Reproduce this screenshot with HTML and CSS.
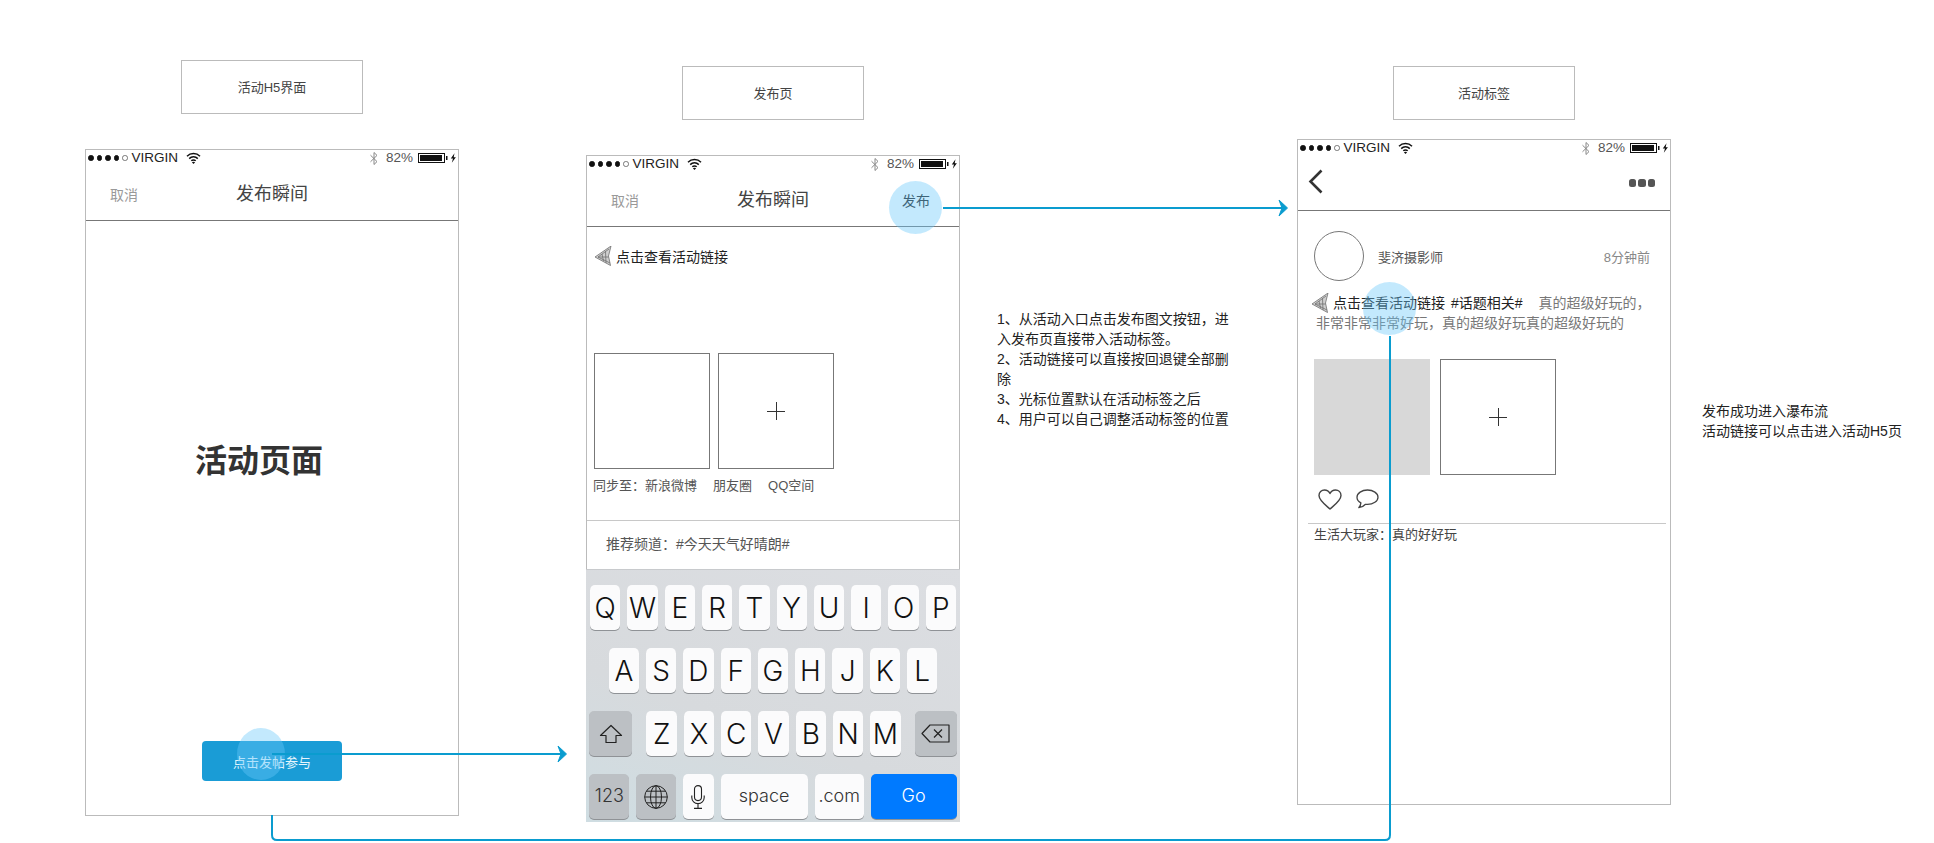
FILE: index.html
```html
<!DOCTYPE html>
<html>
<head>
<meta charset="utf-8"/>
<meta name="viewport" content="width=device-width, initial-scale=1.0"/>
<link rel="stylesheet" href="styles.css">
</head>
<body>

<svg class="defs" width="0" height="0">
    <symbol id="wifi" viewBox="0 0 15 12">
        <path d="M1 4.200C4.600 .6 10.400 .6 14 4.200M3.200 6.600C5.600 4.200 9.400 4.200 11.800 6.600M5.300 8.800C6.500 7.600 8.500 7.600 9.700 8.800" fill="none" stroke="#111" stroke-width="1.500"/>
        <path d="M7.500 12L5.900 10.300C6.800 9.500 8.200 9.500 9.100 10.300Z" fill="#111"/>
    </symbol>
    <symbol id="bluetooth" viewBox="0 0 8 13">
        <path d="M.5 3.200L7 9.600 4 12.500V.5L7 3.400 .5 9.800" fill="none" stroke="#888" stroke-width="1"/>
    </symbol>
    <symbol id="battery" viewBox="0 0 38 10">
        <rect x=".5" y=".5" width="26" height="9" fill="none" stroke="#111"/>
        <rect x="2" y="2" width="22" height="6" fill="#111"/>
        <rect x="28" y="3" width="1.500" height="4" fill="#111"/>
        <path d="M36.500 .3L32.800 5.600H35L33.800 9.800 37.900 4.200H35.700Z" fill="#111"/>
    </symbol>
    <symbol id="plane" viewBox="0 0 17 20">
        <path d="M0 11L16 0 13.500 10 15.500 19.500Z" fill="#cfcfcf"/>
        <path d="M0 11L16 0 13.500 10 15.500 19.500ZM3 11L14 3M3 11H13.500M3 11L15 17M7 8L8.500 15M10.500 5.500L11 17" fill="none" stroke="#6f6f6f" stroke-width=".8"/>
    </symbol>
</svg>

<div class="tag tag-h5">活动H5界面</div>
<div class="tag tag-pub">发布页</div>
<div class="tag tag-label">活动标签</div>

<!-- 活动页 -->
<div class="phone phone-h5">
    <div class="statusBar">
        <span class="signal"><i></i><i></i><i></i><i></i><i class="off"></i></span>
        <span class="carrier">VIRGIN</span>
        <svg class="icoWifi"><use href="#wifi"/></svg>
        <svg class="icoBt"><use href="#bluetooth"/></svg>
        <span class="percent">82%</span>
        <svg class="icoBattery"><use href="#battery"/></svg>
    </div>
    <div class="navBar">
        <span class="navCancel">取消</span>
        <span class="navTitle">发布瞬间</span>
    </div>
    <div class="h5Body">
        <div class="h5Title">活动页面</div>
        <div class="joinBtn">点击发帖参与</div>
    </div>
    <div class="tap tap-join"></div>
</div>

<!-- 发布页 -->
<div class="phone phone-pub">
    <div class="statusBar">
        <span class="signal"><i></i><i></i><i></i><i></i><i class="off"></i></span>
        <span class="carrier">VIRGIN</span>
        <svg class="icoWifi"><use href="#wifi"/></svg>
        <svg class="icoBt"><use href="#bluetooth"/></svg>
        <span class="percent">82%</span>
        <svg class="icoBattery"><use href="#battery"/></svg>
    </div>
    <div class="navBar">
        <span class="navCancel">取消</span>
        <span class="navTitle">发布瞬间</span>
        <span class="navSend">发布</span>
    </div>
    <div class="linkRow">
        <svg class="icoPlane"><use href="#plane"/></svg>
        <span>点击查看活动链接</span>
    </div>
    <div class="thumbs thumbs-pub">
        <div class="thumb"></div>
        <div class="thumb plus"></div>
    </div>
    <div class="syncRow">
        <span>同步至：新浪微博</span>
        <span>朋友圈</span>
        <span>QQ空间</span>
    </div>
    <div class="channelRow">推荐频道：#今天天气好晴朗#</div>
    <div class="keyboard">
        <div class="keyRow">
            <span class="key">Q</span><span class="key">W</span><span class="key">E</span><span class="key">R</span><span class="key">T</span><span class="key">Y</span><span class="key">U</span><span class="key">I</span><span class="key">O</span><span class="key">P</span>
        </div>
        <div class="keyRow">
            <span class="key">A</span><span class="key">S</span><span class="key">D</span><span class="key">F</span><span class="key">G</span><span class="key">H</span><span class="key">J</span><span class="key">K</span><span class="key">L</span>
        </div>
        <div class="keyRow">
            <span class="key dark shift">
                <svg width="24" height="20" viewBox="0 0 24 20"><path d="M12 1.500L1.500 11.500H7V18.500H17V11.500H22.500Z" fill="none" stroke="#222" stroke-width="1.200" stroke-linejoin="round"/></svg>
            </span>
            <span class="key">Z</span><span class="key">X</span><span class="key">C</span><span class="key">V</span><span class="key">B</span><span class="key">N</span><span class="key">M</span>
            <span class="key dark del">
                <svg width="29" height="19" viewBox="0 0 29 19"><path d="M9 1H28V18H9L1 9.500Z" fill="none" stroke="#222" stroke-width="1.200" stroke-linejoin="round"/><path d="M13 5.500L21 13.500M21 5.500L13 13.500" stroke="#222" stroke-width="1.200"/></svg>
            </span>
        </div>
        <div class="keyRow">
            <span class="key dark small w40">123</span>
            <span class="key dark w40">
                <svg width="24" height="24" viewBox="0 0 24 24" fill="none" stroke="#222" stroke-width="1"><circle cx="12" cy="12" r="11.300"/><ellipse cx="12" cy="12" rx="5.500" ry="11.300"/><path d="M12 .7V23.300M.7 12H23.300M2.400 6.200H21.600M2.400 17.800H21.600"/></svg>
            </span>
            <span class="key">
                <svg width="14" height="24" viewBox="0 0 14 24" fill="none" stroke="#222" stroke-width="1.100"><rect x="3.500" y=".6" width="7" height="15" rx="3.500"/><path d="M.8 10.500V12.500C.8 16 3.500 18.600 7 18.600S13.200 16 13.200 12.500V10.500M7 18.600V23.400M3 23.400H11"/></svg>
            </span>
            <span class="key small w87">space</span>
            <span class="key small w49">.com</span>
            <span class="key go small">Go</span>
        </div>
    </div>
    <div class="tap tap-send"></div>
</div>

<!-- 活动标签 -->
<div class="phone phone-label">
    <div class="statusBar">
        <span class="signal"><i></i><i></i><i></i><i></i><i class="off"></i></span>
        <span class="carrier">VIRGIN</span>
        <svg class="icoWifi"><use href="#wifi"/></svg>
        <svg class="icoBt"><use href="#bluetooth"/></svg>
        <span class="percent">82%</span>
        <svg class="icoBattery"><use href="#battery"/></svg>
    </div>
    <div class="navBar navBack">
        <svg class="backArrow" width="15" height="25" viewBox="0 0 15 25"><path d="M13.500 1.500L2.500 12.500 13.500 23.500" fill="none" stroke="#333" stroke-width="2.600"/></svg>
        <span class="moreDots"><i></i><i></i><i></i></span>
    </div>
    <div class="authorRow">
        <div class="avatar"></div>
        <span class="authorName">斐济摄影师</span>
        <span class="authorTime">8分钟前</span>
    </div>
    <div class="postText">
        <div class="postLine">
            <svg class="icoPlane"><use href="#plane"/></svg>
            <span class="postLink">点击查看活动链接</span>
            <span class="postTopic">#话题相关#</span>
            <span class="postBody">真的超级好玩的，</span>
        </div>
        <div class="postLine2">非常非常非常好玩，真的超级好玩真的超级好玩的</div>
    </div>
    <div class="thumbs thumbs-label">
        <div class="thumb filled"></div>
        <div class="thumb plus"></div>
    </div>
    <div class="actions">
        <svg width="24" height="21" viewBox="0 0 24 21"><path d="M12 20C8 16.500 1 11.500 1 6.500 1 3 3.500 1 6.500 1 9 1 11 2.500 12 4.500 13 2.500 15 1 17.500 1 20.500 1 23 3 23 6.500 23 11.500 16 16.500 12 20Z" fill="none" stroke="#444" stroke-width="1.400" stroke-linejoin="round"/></svg>
        <svg width="23" height="20" viewBox="0 0 23 20"><path d="M11.500 1C5.800 1 1 4.200 1 8.200 1 10.600 2.500 12.600 4.900 13.900 4.800 15.700 3.900 17.500 2.800 18.700 5.500 18.400 8 17 9.500 15.300 10.200 15.400 10.800 15.400 11.500 15.400 17.200 15.400 22 12.200 22 8.200 22 4.200 17.200 1 11.500 1Z" fill="none" stroke="#444" stroke-width="1.300" stroke-linejoin="round"/></svg>
    </div>
    <div class="commentRow">生活大玩家：真的好好玩</div>
    <div class="tap tap-link"></div>
</div>

<div class="note note-steps">1、从活动入口点击发布图文按钮，进入发布页直接带入活动标签。<br>2、活动链接可以直接按回退键全部删除<br>3、光标位置默认在活动标签之后<br>4、用户可以自己调整活动标签的位置</div>
<div class="note note-done">发布成功进入瀑布流<br>活动链接可以点击进入活动H5页</div>

<svg class="wires" width="1934" height="843" viewBox="0 0 1934 843" fill="none" stroke="#0a9ccf" stroke-width="2">
    <path d="M272 754H565"/>
    <path d="M558 746L566.500 754 558 762 561 754Z" fill="#0a9ccf" stroke-width="1"/>
    <path d="M943 208H1286"/>
    <path d="M1279 200L1287.500 208 1279 216 1282 208Z" fill="#0a9ccf" stroke-width="1"/>
    <path d="M272 815V835Q272 840 277 840H1385Q1390 840 1390 835V336"/>
</svg>

</body>
</html>
```

FILE: styles.css
```css
* {
    box-sizing: border-box;
}

body {
    margin: 0;
    width: 1934px;
    height: 843px;
    position: relative;
    overflow: hidden;
    background: #ffffff;
    color: #333333;
    font-family: "Liberation Sans", "Noto Sans CJK SC", sans-serif;
    font-size: 14px;
}

.defs {
    position: absolute;
}

/* artboards on the canvas */
.tag {
    position: absolute;
    width: 182px;
    height: 54px;
    padding-bottom: 2px;
    border: 1px solid #bbbbbb;
    display: flex;
    align-items: center;
    justify-content: center;
    font-size: 13px;
    color: #444444;
}
.tag-h5 { left: 181px; top: 60px; }
.tag-pub { left: 682px; top: 66px; }
.tag-label { left: 1393px; top: 66px; }

.phone {
    position: absolute;
    width: 374px;
    height: 666px;
    border: 1px solid #bbbbbb;
    background: #ffffff;
}
.phone-h5 { left: 85px; top: 149px; height: 667px; }
.phone-pub { left: 586px; top: 155px; height: 667px; }
.phone-label { left: 1297px; top: 139px; }

/* status bar */
.statusBar {
    height: 16px;
    padding: 0 2px;
    display: flex;
    align-items: center;
    font-size: 13.500px;
    line-height: 16px;
    color: #222222;
}
.signal {
    display: flex;
    gap: 3px;
    margin-right: 4px;
}
.signal i {
    width: 5.500px;
    height: 5.500px;
    border-radius: 50%;
    background: #111111;
    border: 1px solid #111111;
}
.signal i.off {
    background: #ffffff;
    border-color: #777777;
}
.carrier {
    width: 47px;
}
.icoWifi {
    width: 15px;
    height: 12px;
    margin-left: 7px;
}
.icoBt {
    width: 8px;
    height: 13px;
    margin-left: auto;
}
.percent {
    margin-left: 8px;
    color: #555555;
}
.icoBattery {
    width: 38px;
    height: 10px;
    margin-left: 5px;
}

/* nav */
.navBar {
    height: 55px;
    padding: 0 24px 2px;
    border-bottom: 1px solid #777777;
    display: grid;
    grid-template-columns: 1fr auto 1fr;
    align-items: center;
}
.navCancel {
    margin-top: 3px;
    color: #999999;
}
.navTitle {
    font-size: 18px;
    color: #444444;
}
.navSend {
    justify-self: end;
    margin-right: 5px;
    margin-top: 3px;
    color: #222222;
}
.navBack {
    padding: 0 15px 0 10px;
    display: flex;
    justify-content: space-between;
}
.backArrow {
    margin-bottom: 4px;
}
.moreDots {
    display: flex;
    gap: 2px;
}
.moreDots i {
    width: 7.500px;
    height: 7.500px;
    border-radius: 2.500px;
    background: #555555;
}

/* tap marks */
.tap {
    position: absolute;
    width: 53px;
    height: 53px;
    border-radius: 50%;
    background: rgba(106, 200, 250, .4);
}
.tap-join { left: 151px; top: 578px; width: 48px; height: 52px; }
.tap-send { left: 302px; top: 25px; }
.tap-link { left: 65px; top: 142px; }

/* h5 page */
.h5Body {
    padding: 217px 0 0 109px;
}
.h5Title {
    font-size: 32px;
    line-height: 46px;
    font-weight: bold;
    color: #333333;
}
.joinBtn {
    width: 140px;
    height: 40px;
    margin: 257px 0 0 7px;
    border-radius: 4px;
    background: #1a9cd6;
    color: #e6f6fd;
    font-size: 13px;
    display: flex;
    align-items: center;
    justify-content: center;
}

/* publish page */
.linkRow {
    margin-top: 18px;
    padding-left: 8px;
    height: 22px;
    display: flex;
    align-items: center;
    color: #222222;
}
.icoPlane {
    width: 17px;
    height: 20px;
    margin-right: 4px;
    flex: none;
}
.thumbs {
    display: flex;
}
.thumbs-pub {
    margin: 86px 0 0 7px;
    gap: 8px;
}
.thumbs-label {
    margin: 26px 0 0 16px;
    gap: 10px;
}
.thumb {
    width: 116px;
    height: 116px;
    border: 1px solid #777777;
    position: relative;
}
.thumb.filled {
    background: #d8d8d8;
    border: 0;
}
.thumb.plus::before,
.thumb.plus::after {
    content: "";
    position: absolute;
    background: #333333;
}
.thumb.plus::before {
    left: 48px;
    top: 56.500px;
    width: 18px;
    height: 1.500px;
}
.thumb.plus::after {
    left: 56.500px;
    top: 48px;
    width: 1.500px;
    height: 18px;
}
.syncRow {
    margin: 8px 0 0 6px;
    display: flex;
    gap: 16px;
    font-size: 13px;
    line-height: 18px;
    color: #555555;
}
.channelRow {
    margin-top: 25px;
    height: 49px;
    padding: 0 0 5px 19px;
    border-top: 1px solid #c8c8c8;
    display: flex;
    align-items: center;
    color: #555555;
}

/* keyboard */
.keyboard {
    margin: 0 -1px;
    height: 253px;
    padding: 15px 0 0;
    display: flex;
    flex-direction: column;
    gap: 18px;
    border-top: 1px solid #c8cacd;
    background: linear-gradient(200deg, #dcdee2 0%, #d7dadd 60%, #cfdde2 100%);
}
.keyRow {
    height: 45px;
    display: flex;
    justify-content: center;
    gap: 7px;
}
.key {
    width: 30.300px;
    height: 45px;
    border-radius: 5px;
    background: #fbfbfc;
    box-shadow: 0 1px 0 #8f9296;
    display: flex;
    align-items: center;
    justify-content: center;
    font-family: Inter, "Liberation Sans", sans-serif;
    font-weight: 300;
    font-size: 28px;
    color: #111111;
}
.key.dark {
    background: #bcc0c4;
}
.key.shift {
    width: 43px;
    margin-right: 7px;
}
.key.del {
    width: 42px;
    margin-left: 7px;
}
.key.small {
    padding-bottom: 3px;
    font-size: 18px;
    color: #333333;
}
.w40 { width: 40px; }
.w87 { width: 87px; }
.w49 { width: 49px; }
.key.go {
    width: 86px;
    background: #007aff;
    color: #ffffff;
}

/* label page */
.authorRow {
    margin-top: 20px;
    padding: 0 20px 0 16px;
    display: flex;
    align-items: center;
    font-size: 13px;
}
.avatar {
    width: 50px;
    height: 50px;
    border: 1px solid #777777;
    border-radius: 50%;
    margin-right: 14px;
}
.authorName {
    color: #555555;
}
.authorTime {
    margin-left: auto;
    color: #888888;
}
.postText {
    margin-top: 12px;
    padding-left: 14px;
    line-height: 20px;
    color: #777777;
}
.postLine {
    display: flex;
    align-items: center;
    white-space: nowrap;
}
.postLink {
    color: #222222;
}
.postTopic {
    margin-left: 6px;
    color: #222222;
}
.postBody {
    margin-left: 16px;
}
.postLine2 {
    padding-left: 4px;
    white-space: nowrap;
}
.actions {
    margin: 14px 0 0 20px;
    display: flex;
    gap: 14px;
}
.commentRow {
    margin: 13px 4px 0 10px;
    padding: 1px 0 0 6px;
    border-top: 1px solid #c8c8c8;
    font-size: 13px;
    line-height: 20px;
    color: #444444;
}

/* side notes */
.note {
    position: absolute;
    line-height: 20px;
    color: #222222;
}
.note-steps {
    left: 997px;
    top: 309px;
    width: 240px;
}
.note-done {
    left: 1702px;
    top: 401px;
    width: 220px;
}

.wires {
    position: absolute;
    left: 0;
    top: 0;
}
```
